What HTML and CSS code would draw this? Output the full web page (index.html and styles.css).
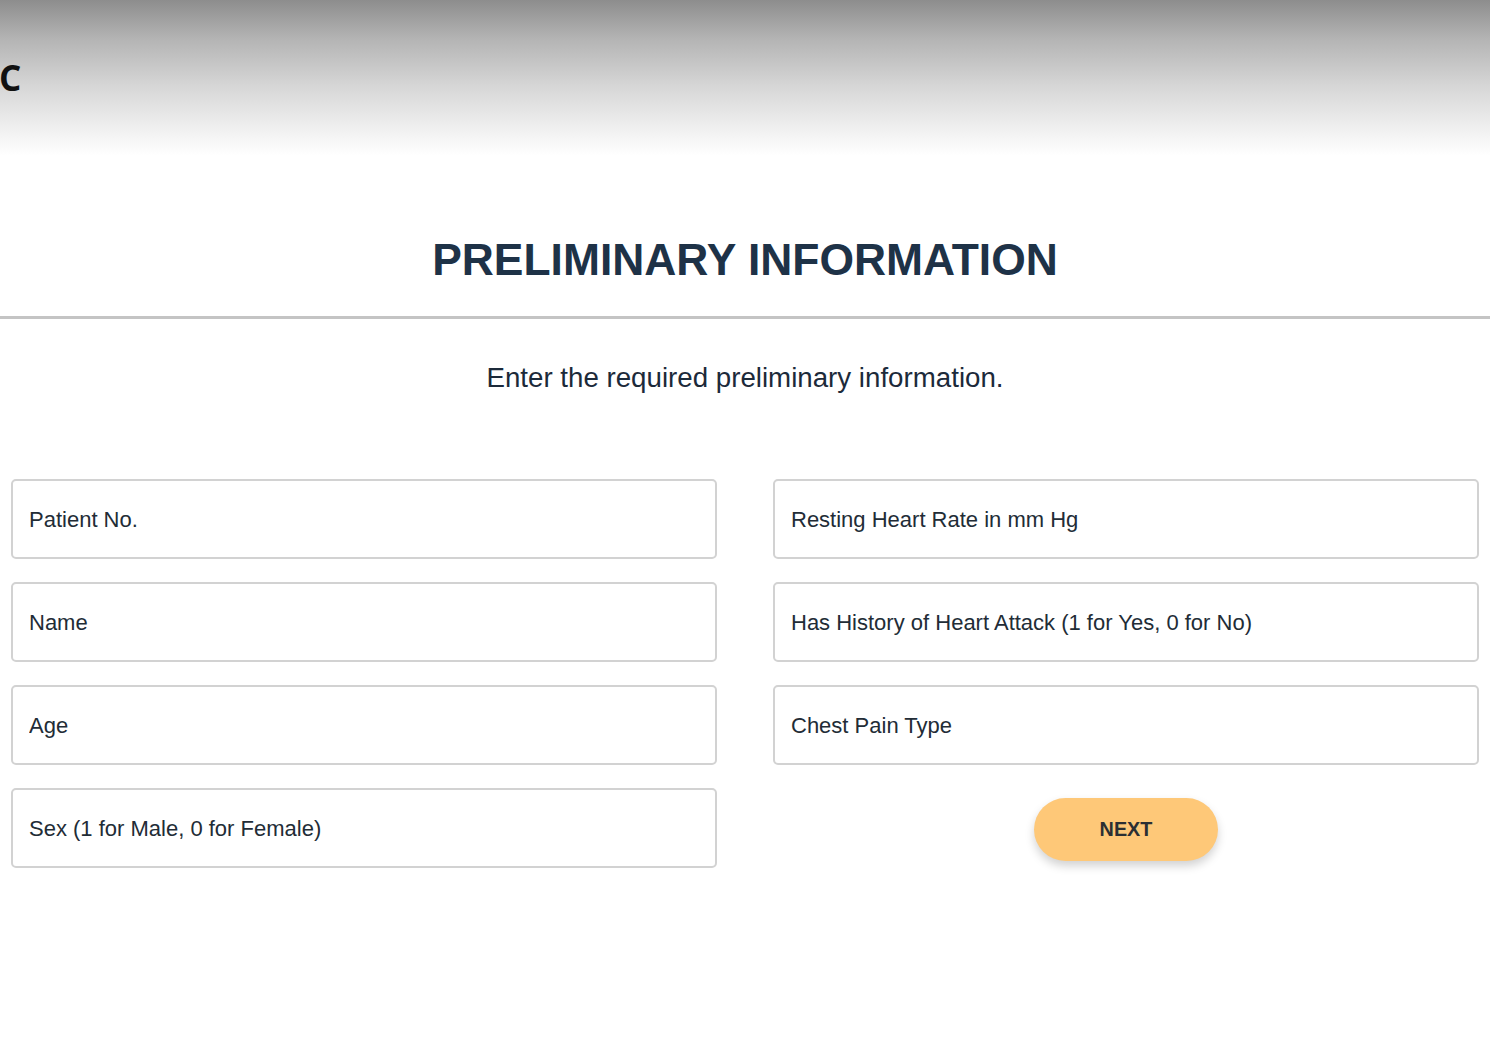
FILE: index.html
```html
<!DOCTYPE html>
<html lang="en">
<head>
<meta charset="utf-8">
<title>Preliminary Information</title>
<link rel="stylesheet" href="styles.css">
</head>
<body>
<header class="topbar">
  <span class="brand">C</span>
</header>
<main class="page">
  <h1 class="title">PRELIMINARY INFORMATION</h1>
  <hr class="divider">
  <p class="subtitle">Enter the required preliminary information.</p>
  <form class="form">
    <div class="col">
      <input class="field" type="text" placeholder="Patient No.">
      <input class="field" type="text" placeholder="Name">
      <input class="field" type="text" placeholder="Age">
      <input class="field" type="text" placeholder="Sex (1 for Male, 0 for Female)">
    </div>
    <div class="col">
      <input class="field" type="text" placeholder="Resting Heart Rate in mm Hg">
      <input class="field" type="text" placeholder="Has History of Heart Attack (1 for Yes, 0 for No)">
      <input class="field" type="text" placeholder="Chest Pain Type">
      <div class="actions">
        <button class="next" type="button">NEXT</button>
      </div>
    </div>
  </form>
</main>
</body>
</html>
```

FILE: styles.css
```css
html, body {
  margin: 0;
  padding: 0;
  background: #ffffff;
}
body {
  font-family: "Liberation Sans", Arial, sans-serif;
  width: 1490px;
  height: 1064px;
  overflow: hidden;
}
.topbar {
  height: 156px;
  background: linear-gradient(to bottom, #8d8d8d 0%, #b4b4b4 25%, #d6d6d6 55%, #f2f2f2 85%, #ffffff 100%);
  display: flex;
  align-items: center;
  box-sizing: border-box;
  padding-bottom: 2px;
}
.brand {
  font-family: "Open Sans", sans-serif;
  font-weight: 700;
  font-size: 35px;
  color: #111111;
  margin-left: -1px;
  line-height: 1;
}
.page {
  display: flex;
  flex-direction: column;
}
.title {
  margin: 76px 0 0;
  text-align: center;
  font-size: 44.4px;
  font-weight: 700;
  color: #1e3247;
  line-height: 56px;
}
.divider {
  margin: 28px 0 0;
  border: 0;
  height: 3px;
  background: #c4c4c4;
}
.subtitle {
  margin: 42px 0 0;
  text-align: center;
  font-size: 27.7px;
  color: #1c2a3a;
  line-height: 34px;
}
.form {
  margin-top: 84px;
  display: grid;
  grid-template-columns: 1fr 1fr;
  column-gap: 56px;
  padding: 0 11px;
}
.col {
  display: flex;
  flex-direction: column;
  gap: 23px;
}
.field {
  height: 80px;
  box-sizing: border-box;
  border: 2px solid #d2d2d2;
  border-radius: 5px;
  padding: 2px 16px 0;
  font-family: "Liberation Sans", Arial, sans-serif;
  font-size: 22px;
  color: #222;
  background: #fff;
  outline: none;
}
.field::placeholder {
  color: #222c36;
  opacity: 1;
}
.actions {
  display: flex;
  justify-content: center;
  padding-top: 10px;
}
.next {
  width: 184px;
  height: 63px;
  border: 0;
  border-radius: 32px;
  background: #fec878;
  box-shadow: 0 5px 10px rgba(0, 0, 0, 0.18);
  font-family: "Liberation Sans", Arial, sans-serif;
  font-weight: 700;
  font-size: 19.8px;
  color: #2b2f33;
  cursor: pointer;
}
```
